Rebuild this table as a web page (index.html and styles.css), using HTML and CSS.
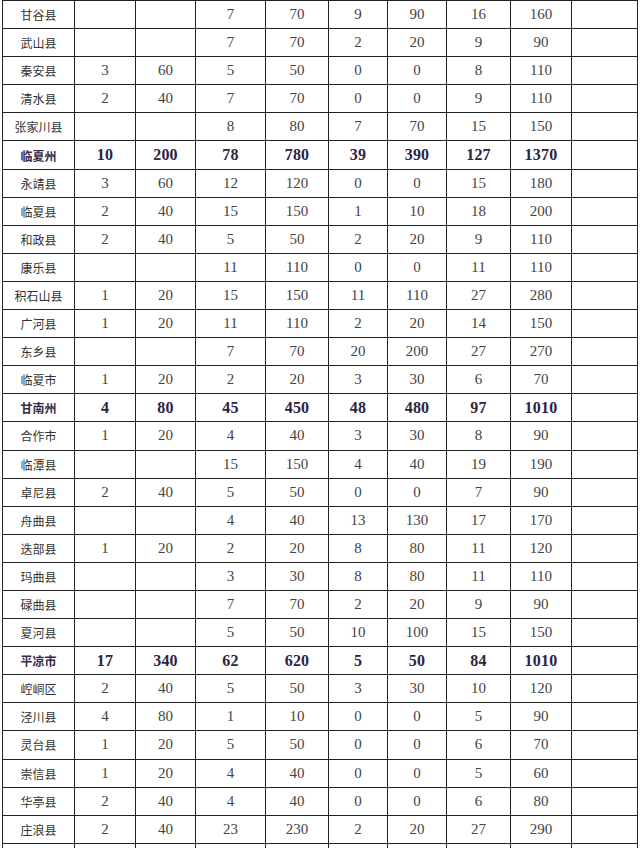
FILE: index.html
```html
<!DOCTYPE html>
<html lang="zh">
<head>
<meta charset="utf-8">
<link rel="stylesheet" href="styles.css">
</head>
<body>
<table class="data">
<colgroup>
<col class="c1"><col class="c2"><col class="c3"><col class="c4"><col class="c5"><col class="c6"><col class="c7"><col class="c8"><col class="c9"><col class="c10">
</colgroup>
<tbody>
<tr><td>甘谷县</td><td></td><td></td><td>7</td><td>70</td><td>9</td><td>90</td><td>16</td><td>160</td><td></td></tr>
<tr><td>武山县</td><td></td><td></td><td>7</td><td>70</td><td>2</td><td>20</td><td>9</td><td>90</td><td></td></tr>
<tr><td>秦安县</td><td>3</td><td>60</td><td>5</td><td>50</td><td>0</td><td>0</td><td>8</td><td>110</td><td></td></tr>
<tr><td>清水县</td><td>2</td><td>40</td><td>7</td><td>70</td><td>0</td><td>0</td><td>9</td><td>110</td><td></td></tr>
<tr><td>张家川县</td><td></td><td></td><td>8</td><td>80</td><td>7</td><td>70</td><td>15</td><td>150</td><td></td></tr>
<tr class="sum"><td>临夏州</td><td>10</td><td>200</td><td>78</td><td>780</td><td>39</td><td>390</td><td>127</td><td>1370</td><td></td></tr>
<tr><td>永靖县</td><td>3</td><td>60</td><td>12</td><td>120</td><td>0</td><td>0</td><td>15</td><td>180</td><td></td></tr>
<tr><td>临夏县</td><td>2</td><td>40</td><td>15</td><td>150</td><td>1</td><td>10</td><td>18</td><td>200</td><td></td></tr>
<tr><td>和政县</td><td>2</td><td>40</td><td>5</td><td>50</td><td>2</td><td>20</td><td>9</td><td>110</td><td></td></tr>
<tr><td>康乐县</td><td></td><td></td><td>11</td><td>110</td><td>0</td><td>0</td><td>11</td><td>110</td><td></td></tr>
<tr><td>积石山县</td><td>1</td><td>20</td><td>15</td><td>150</td><td>11</td><td>110</td><td>27</td><td>280</td><td></td></tr>
<tr><td>广河县</td><td>1</td><td>20</td><td>11</td><td>110</td><td>2</td><td>20</td><td>14</td><td>150</td><td></td></tr>
<tr><td>东乡县</td><td></td><td></td><td>7</td><td>70</td><td>20</td><td>200</td><td>27</td><td>270</td><td></td></tr>
<tr><td>临夏市</td><td>1</td><td>20</td><td>2</td><td>20</td><td>3</td><td>30</td><td>6</td><td>70</td><td></td></tr>
<tr class="sum"><td>甘南州</td><td>4</td><td>80</td><td>45</td><td>450</td><td>48</td><td>480</td><td>97</td><td>1010</td><td></td></tr>
<tr><td>合作市</td><td>1</td><td>20</td><td>4</td><td>40</td><td>3</td><td>30</td><td>8</td><td>90</td><td></td></tr>
<tr><td>临潭县</td><td></td><td></td><td>15</td><td>150</td><td>4</td><td>40</td><td>19</td><td>190</td><td></td></tr>
<tr><td>卓尼县</td><td>2</td><td>40</td><td>5</td><td>50</td><td>0</td><td>0</td><td>7</td><td>90</td><td></td></tr>
<tr><td>舟曲县</td><td></td><td></td><td>4</td><td>40</td><td>13</td><td>130</td><td>17</td><td>170</td><td></td></tr>
<tr><td>迭部县</td><td>1</td><td>20</td><td>2</td><td>20</td><td>8</td><td>80</td><td>11</td><td>120</td><td></td></tr>
<tr><td>玛曲县</td><td></td><td></td><td>3</td><td>30</td><td>8</td><td>80</td><td>11</td><td>110</td><td></td></tr>
<tr><td>碌曲县</td><td></td><td></td><td>7</td><td>70</td><td>2</td><td>20</td><td>9</td><td>90</td><td></td></tr>
<tr><td>夏河县</td><td></td><td></td><td>5</td><td>50</td><td>10</td><td>100</td><td>15</td><td>150</td><td></td></tr>
<tr class="sum"><td>平凉市</td><td>17</td><td>340</td><td>62</td><td>620</td><td>5</td><td>50</td><td>84</td><td>1010</td><td></td></tr>
<tr><td>崆峒区</td><td>2</td><td>40</td><td>5</td><td>50</td><td>3</td><td>30</td><td>10</td><td>120</td><td></td></tr>
<tr><td>泾川县</td><td>4</td><td>80</td><td>1</td><td>10</td><td>0</td><td>0</td><td>5</td><td>90</td><td></td></tr>
<tr><td>灵台县</td><td>1</td><td>20</td><td>5</td><td>50</td><td>0</td><td>0</td><td>6</td><td>70</td><td></td></tr>
<tr><td>崇信县</td><td>1</td><td>20</td><td>4</td><td>40</td><td>0</td><td>0</td><td>5</td><td>60</td><td></td></tr>
<tr><td>华亭县</td><td>2</td><td>40</td><td>4</td><td>40</td><td>0</td><td>0</td><td>6</td><td>80</td><td></td></tr>
<tr><td>庄浪县</td><td>2</td><td>40</td><td>23</td><td>230</td><td>2</td><td>20</td><td>27</td><td>290</td><td></td></tr>
<tr><td></td><td></td><td></td><td></td><td></td><td></td><td></td><td></td><td></td><td></td></tr>
</tbody>
</table>
</body>
</html>
```
FILE: styles.css
```css
html, body {
  margin: 0;
  padding: 0;
  background: #fff;
  overflow: hidden;
}
body {
  padding-left: 2px;
}
.data {
  border-collapse: collapse;
  table-layout: fixed;
  width: 636px;
  font-family: "Liberation Serif", "Noto Sans CJK SC", serif;
  font-size: 15px;
  letter-spacing: 0;
  color: #444;
}
.c1 { width: 72px; }
.c2 { width: 61px; }
.c3 { width: 60px; }
.c4 { width: 70px; }
.c5 { width: 63px; }
.c6 { width: 59px; }
.c7 { width: 59px; }
.c8 { width: 64px; }
.c9 { width: 61px; }
.c10 { width: 66px; }
.data tr {
  height: 28.1px;
}
.data td {
  border: 1px solid #222;
  padding: 0;
  text-align: center;
  vertical-align: middle;
  white-space: nowrap;
}
.data td:first-child {
  font-family: "Noto Sans CJK SC", sans-serif;
  font-size: 12px;
  letter-spacing: 0;
  color: #333;
}
.data .sum td {
  font-family: "Liberation Serif", "Noto Sans CJK SC", serif;
  font-weight: bold;
  font-size: 16px;
  letter-spacing: 0.2px;
  color: #2e2340;
}
.data .sum td:first-child {
  font-family: "Noto Sans CJK SC", sans-serif;
  font-size: 12px;
  letter-spacing: 0;
  color: #3b2a4a;
}
```
